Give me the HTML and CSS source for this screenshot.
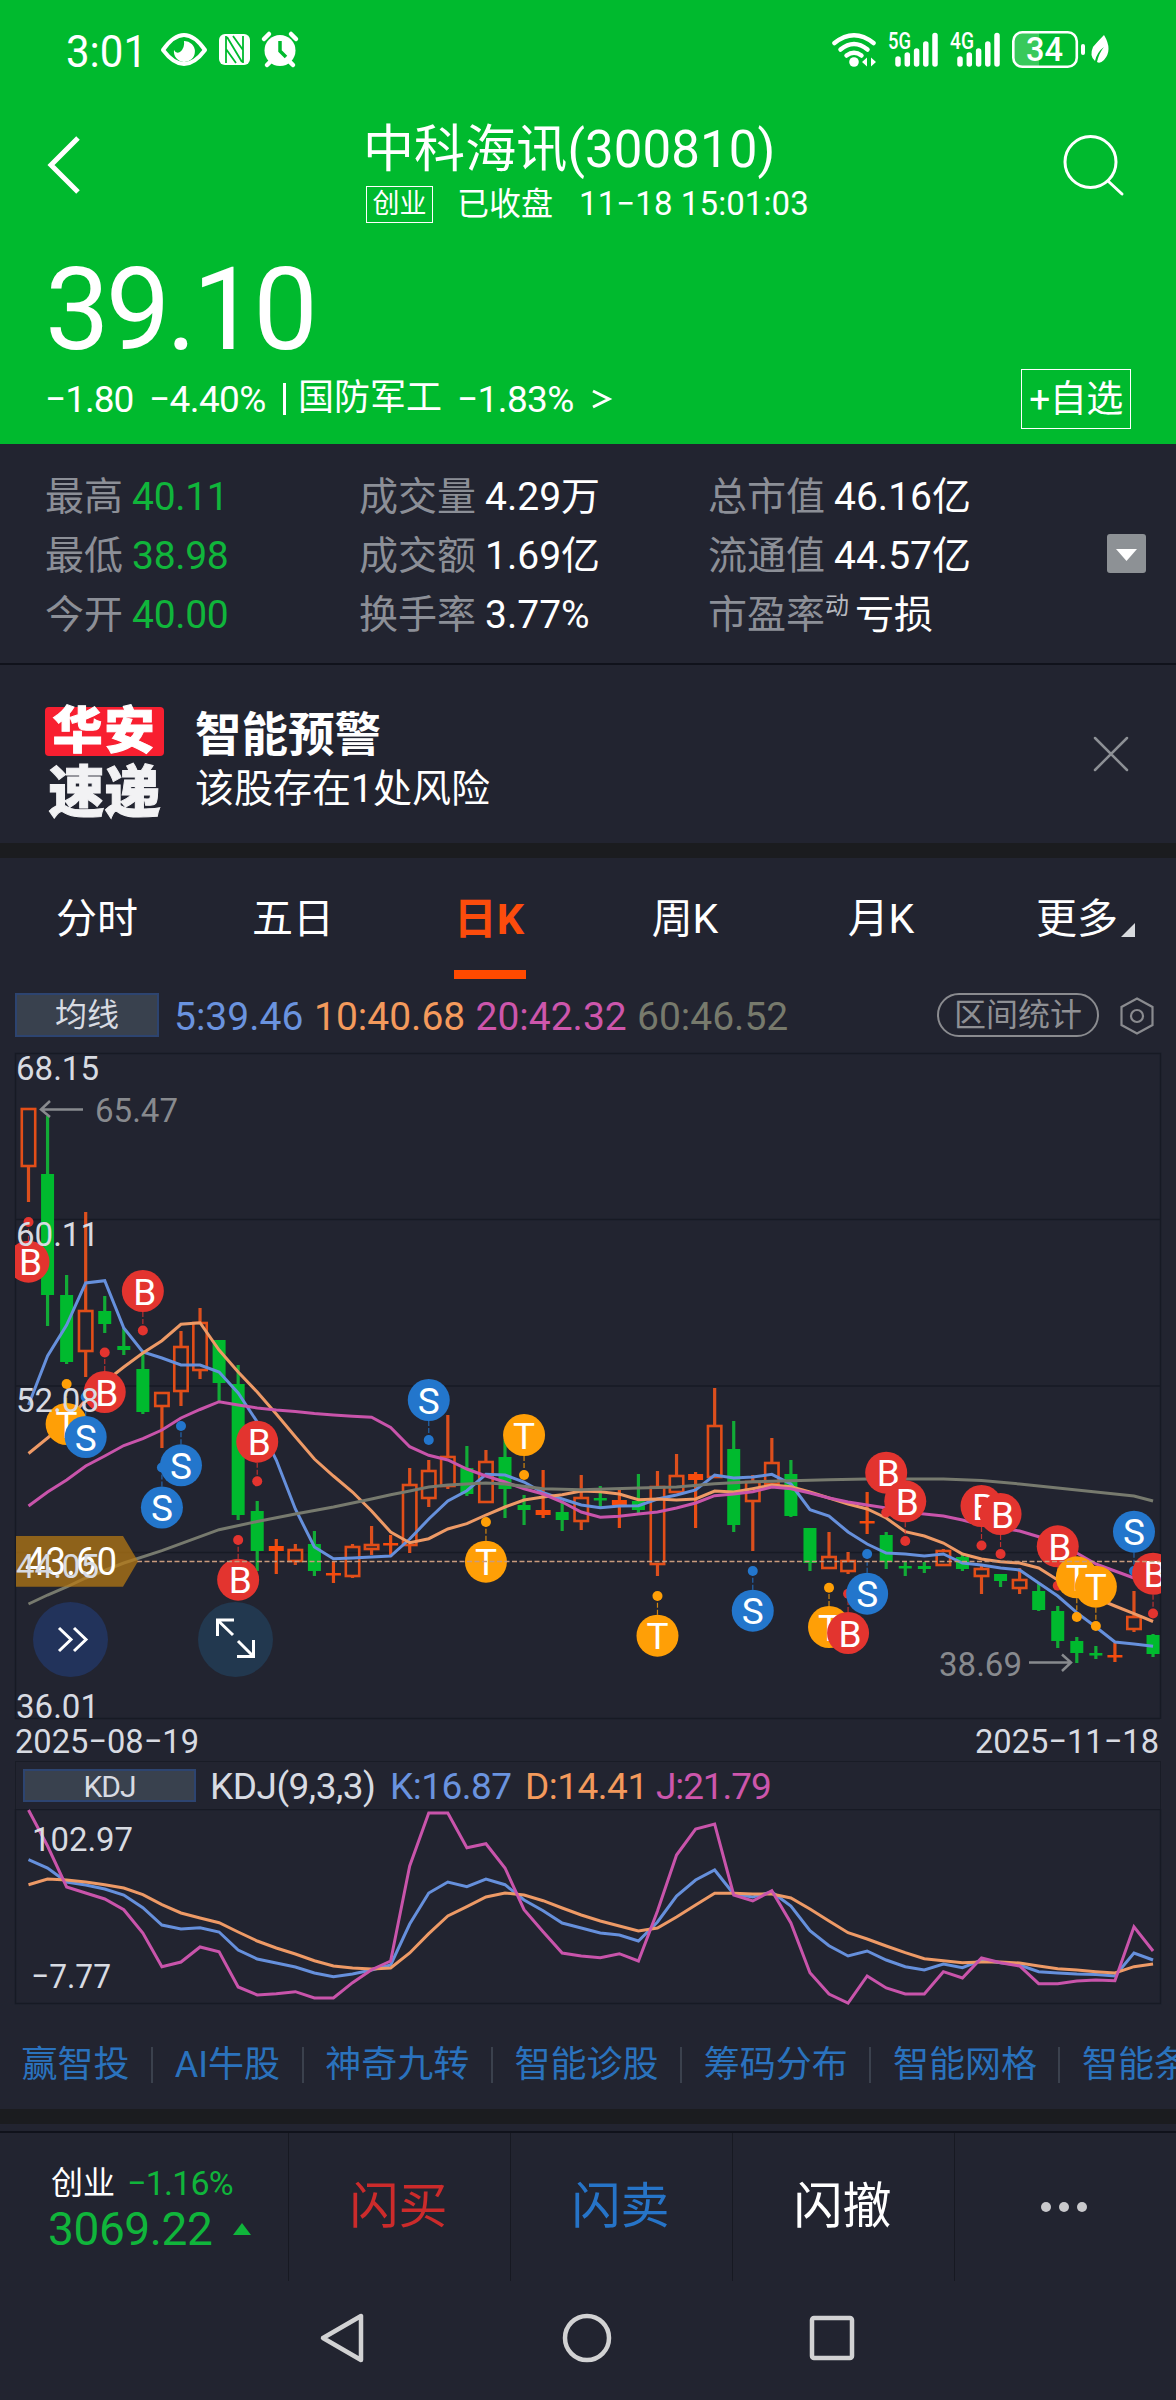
FILE: index.html
```html
<!DOCTYPE html>
<html lang="zh-CN">
<head>
    <meta charset="UTF-8">
    <meta name="viewport" content="width=device-width, initial-scale=1.0">
    <title>中科海讯(300810)</title>
    <link rel="stylesheet" href="styles.css">
</head>
<body>
    <header class="header">
        <div class="status-bar">
            <svg class="status-left" width="240" height="44" viewBox="64 28 240 44">
                <text x="66" y="66.500" font-size="45" textLength="81" lengthAdjust="spacingAndGlyphs" class="status-time">3:01</text>
                <path d="M163 50 Q184 20 205 50 Q184 78 163 50Z" fill="none" stroke="#fff" stroke-width="4" stroke-linejoin="round"/>
                <path d="M184 41 a10.500 10.500 0 1 1 -10 9 q2 4 6 2 q5 -4 4 -11z"/>
                <rect x="219" y="34" width="31" height="31" rx="6"/>
                <path d="M226 36 V63 M243 36 V63 M227 37 L242 62 M233 36 L243 50 M226 49 L236 63" stroke="#00ba2e" stroke-width="1.800" fill="none"/>
                <circle cx="280" cy="50.500" r="15.500"/>
                <path d="M264 39 l5 -5 M291 34 l5 5 M270 62 l-3 3 M290 62 l3 3" stroke="#fff" stroke-width="4.500" stroke-linecap="round"/>
                <path d="M280 41 V51 L286 57" fill="none" stroke="#00ba2e" stroke-width="3.500"/>
            </svg>
            <svg class="status-right" width="284" height="44" viewBox="830 28 284 44">
                <g fill="none" stroke="#fff" stroke-width="4.500" stroke-linecap="round">
                    <path d="M834.500 43 Q854 27.500 873.500 43"/>
                    <path d="M840.500 49.500 Q854 38.500 867.500 49.500"/>
                    <path d="M846.500 55.500 Q854 50 861.500 55.500"/>
                </g>
                <circle cx="854" cy="62" r="4.800"/>
                <path d="M862 62 l5 -4.500 v9z M876 62 l-5 -4.500 v9z"/>
                <text x="888" y="49" font-size="23" textLength="23" lengthAdjust="spacingAndGlyphs" class="status-net">5G</text>
                <path d="M898 59 V64 M907.300 55 V64 M916.600 51 V64 M925.800 44 V64 M935 35.500 V64" stroke="#fff" stroke-width="5.500" stroke-linecap="round"/>
                <text x="950" y="49" font-size="23" textLength="24" lengthAdjust="spacingAndGlyphs" class="status-net">4G</text>
                <path d="M960 59 V64 M969.300 55 V64 M978.600 51 V64 M987.800 44 V64 M997 35.500 V64" stroke="#fff" stroke-width="5.500" stroke-linecap="round"/>
                <path d="M1039 33 H1023 Q1014 33 1014 42 V57 Q1014 66 1023 66 H1039Z" opacity=".22"/>
                <rect x="1013.300" y="32.300" width="63.500" height="34.500" rx="9" fill="none" stroke="#fff" stroke-width="2.600"/>
                <text x="1026" y="61" font-size="33" textLength="37" lengthAdjust="spacingAndGlyphs" class="status-battery">34</text>
                <rect x="1081" y="44" width="4" height="11" rx="2"/>
                <path d="M1104 35 Q1113 50 1104 60 Q1100 64 1097 62 Q1099 53 1104 47 Q1097 52 1095 61 Q1089 56 1093 47 Q1098 41 1104 35Z"/>
            </svg>
        </div>

        <div class="title-bar">
            <svg class="back" width="36" height="60" viewBox="0 0 36 60"><path d="M32 3 L5 30 L32 57"/></svg>
            <div class="title-block">
                <h1>中科海讯(300810)</h1>
                <div class="subtitle"><span class="board">创业</span><span class="state">已收盘</span><span class="time">11−18 15:01:03</span></div>
            </div>
            <svg class="search" width="62" height="62" viewBox="0 0 62 62"><circle cx="27.500" cy="27" r="25.500"/><path d="M45 46 L59 59"/></svg>
        </div>

        <div class="price">39.10</div>
        <div class="change-row">
            <span class="chg">−1.80</span><span class="pct">−4.40%</span><span class="bar"></span><span class="sector">国防军工</span><span class="sector-pct">−1.83%</span>
            <svg class="more" width="22" height="22" viewBox="0 0 22 22"><path d="M2 3 L18 11 L2 19"/></svg>
            <span class="add">+自选</span>
        </div>
    </header>

    <section class="stats">
        <dl>
            <div><dt>最高</dt><dd class="down">40.11</dd></div>
            <div><dt>最低</dt><dd class="down">38.98</dd></div>
            <div><dt>今开</dt><dd class="down">40.00</dd></div>
        </dl>
        <dl>
            <div><dt>成交量</dt><dd>4.29万</dd></div>
            <div><dt>成交额</dt><dd>1.69亿</dd></div>
            <div><dt>换手率</dt><dd>3.77%</dd></div>
        </dl>
        <dl>
            <div><dt>总市值</dt><dd>46.16亿</dd></div>
            <div><dt>流通值</dt><dd>44.57亿</dd></div>
            <div><dt>市盈率<sup>动</sup></dt><dd>亏损</dd></div>
        </dl>
        <svg class="expand" width="39" height="39" viewBox="0 0 39 39"><rect width="39" height="39" rx="3" fill="#8d9195"/><path d="M9 15 H30 L19.500 27Z" fill="#fff"/></svg>
    </section>

    <section class="alert">
        <div class="logo"><span class="logo-top">华安</span><span class="logo-bottom">速递</span></div>
        <div class="alert-text">
            <strong>智能预警</strong>
            <p>该股存在1处风险</p>
        </div>
        <svg class="close" width="36" height="36" viewBox="0 0 36 36"><path d="M2 2 L34 34 M34 2 L2 34"/></svg>
    </section>

    <nav class="tabs">
        <span>分时</span>
        <span>五日</span>
        <span class="active">日K</span>
        <span>周K</span>
        <span>月K</span>
        <span class="tab-more">更多<i></i></span>
    </nav>

    <div class="ma-row">
        <span class="tag">均线</span>
        <span class="blue">5:39.46</span>
        <span class="orange">10:40.68</span>
        <span class="pink">20:42.32</span>
        <span class="grey">60:46.52</span>
        <span class="pill">区间统计</span>
        <svg width="36" height="40" viewBox="0 0 36 40"><path d="M18 2.500 L33.500 11 V29 L18 37.500 L2.500 29 V11Z"/><circle cx="18" cy="20" r="6"/></svg>
    </div>

    <svg id="kline" class="chart" width="1176" height="709" viewBox="0 1052 1176 709"></svg>

    <div class="kdj-row">
        <span class="tag">KDJ</span>
        <span class="kdj-name">KDJ(9,3,3)</span>
        <span class="blue">K:16.87</span>
        <span class="orange">D:14.41</span>
        <span class="pink">J:21.79</span>
    </div>
    <svg id="kdj" class="chart" width="1176" height="196" viewBox="0 1809 1176 196"></svg>

    <div class="links">
        <a>赢智投</a><a>AI牛股</a><a>神奇九转</a><a>智能诊股</a><a>筹码分布</a><a>智能网格</a><a>智能条件</a>
    </div>

    <footer class="trade-bar">
        <div class="index">
            <div class="index-top"><span>创业</span><em>−1.16%</em></div>
            <div class="index-value">3069.22<i></i></div>
        </div>
        <div class="buy">闪买</div>
        <div class="sell">闪卖</div>
        <div>闪撤</div>
        <div class="dots"><i></i><i></i><i></i></div>
    </footer>

    <div class="system-nav">
        <svg width="46" height="52" viewBox="0 0 46 52"><path d="M42 4 V48 L4 26Z"/></svg>
        <svg width="52" height="52" viewBox="0 0 52 52"><circle cx="26" cy="26" r="22"/></svg>
        <svg width="48" height="48" viewBox="0 0 48 48"><rect x="4" y="4" width="40" height="40" rx="2"/></svg>
    </div>

    <script src="chart.js"></script>
</body>
</html>
```

FILE: styles.css
```css
* {
    box-sizing: border-box;
}
body {
    margin: 0;
    width: 1176px;
    height: 2400px;
    overflow: hidden;
    background: #222430;
    color: #fff;
    font-family: Roboto, "Noto Sans CJK SC", sans-serif;
}
h1, p, dl, dd {
    margin: 0;
    font-weight: normal;
}
svg {
    display: block;
    flex: none;
}
svg text {
    font-family: Roboto, "Noto Sans CJK SC", sans-serif;
}

/* header */
.header {
    height: 444px;
    background: #00ba2e;
}
.status-bar {
    display: flex;
    justify-content: space-between;
    padding: 28px 62px 0 64px;
    height: 110px;
    fill: #fff;
}
.status-net, .status-battery {
    font-weight: 500;
}
.title-bar {
    display: flex;
    height: 140px;
}
.back {
    margin: 25px 0 0 46px;
    fill: none;
    stroke: #fff;
    stroke-width: 5;
}
.title-block {
    width: 700px;
    margin-left: 283px;
}
.title-block h1 {
    height: 76px;
    font-size: 51px;
    line-height: 79px;
    letter-spacing: 0.1px;
    text-indent: -2px;
    white-space: nowrap;
}
.subtitle {
    display: flex;
    align-items: center;
    height: 36px;
    padding-left: 1px;
    font-size: 33px;
    line-height: 36px;
    white-space: nowrap;
}
.board {
    width: 67px;
    height: 37px;
    margin-right: 24px;
    border: 1px solid #fff;
    font-size: 27px;
    line-height: 35px;
    text-align: center;
}
.state {
    width: 122px;
    font-size: 32px;
}
.time {
    letter-spacing: 0.1px;
}
.search {
    margin: 25px 0 0 -2px;
    fill: none;
    stroke: #fff;
    stroke-width: 3;
    stroke-linecap: round;
}
.price {
    height: 114px;
    padding-left: 45px;
    font-size: 115px;
    line-height: 119px;
    letter-spacing: -4px;
}
.change-row {
    display: flex;
    align-items: center;
    height: 70px;
    padding: 0 45px;
    font-size: 37px;
    white-space: nowrap;
}
.chg {
    width: 104px;
    letter-spacing: -1px;
}
.pct {
    width: 133px;
    letter-spacing: -0.6px;
}
.bar {
    width: 3px;
    height: 32px;
    margin: 0 12px 0 1px;
    background: #fff;
}
.sector {
    width: 159px;
    font-size: 36px;
    line-height: 60px;
    margin-top: -2px;
}
.sector-pct {
    width: 134px;
    letter-spacing: -0.6px;
}
.more {
    fill: none;
    stroke: #fff;
    stroke-width: 3;
}
.add {
    width: 110px;
    height: 60px;
    margin-left: auto;
    border: 1px solid #fff;
    font-size: 37px;
    line-height: 60px;
    letter-spacing: -0.5px;
    text-align: center;
}

/* stats */
.stats {
    display: flex;
    height: 221px;
    padding: 23px 30px 0 45px;
    border-bottom: 2px solid #10121b;
    font-size: 39px;
    line-height: 60px;
}
.stats dl {
    width: 349px;
}
.stats dl:first-child {
    width: 314px;
}
.stats dl > div {
    display: flex;
    gap: 9px;
    height: 59px;
    white-space: nowrap;
}
.stats dt {
    color: #8c8f97;
}
.stats sup {
    display: inline-block;
    width: 21px;
    color: #b6b8be;
    font-size: 24px;
    line-height: 24px;
    vertical-align: 14px;
}
.down {
    color: #10b53b;
    letter-spacing: -0.3px;
}
.expand {
    margin: 67px 0 0 auto;
}

/* alert */
.alert {
    display: flex;
    height: 193px;
    padding: 42px 47px 0 45px;
    border-bottom: 15px solid #1b1c1f;
}
.logo {
    width: 119px;
    font-size: 50px;
    font-weight: 900;
    text-align: center;
}
.logo span {
    display: block;
    white-space: nowrap;
}
.logo-top {
    height: 49px;
    border-radius: 4px;
    background: #f81f30;
    line-height: 49px;
    letter-spacing: 2px;
    -webkit-text-stroke: 1px #fff;
}
.logo-bottom {
    height: 60px;
    color: #f2f2f4;
    font-size: 56px;
    line-height: 74px;
    -webkit-text-stroke: 1px #f2f2f4;
}
.alert-text {
    margin-left: 31px;
}
.alert-text strong {
    display: block;
    font-size: 46.500px;
    line-height: 56px;
}
.alert-text p {
    font-size: 39px;
    line-height: 53px;
}
.close {
    margin: 29px 0 0 auto;
    fill: none;
    stroke: #8d9095;
    stroke-width: 2.5;
    stroke-linecap: round;
}

/* period tabs */
.tabs {
    display: grid;
    grid-template-columns: repeat(6, 196px);
    height: 122px;
    font-size: 41px;
    line-height: 123px;
    text-align: center;
    text-indent: -2px;
}
.tabs span {
    position: relative;
}
.tabs .active {
    color: #fc4c0c;
    font-size: 43px;
    font-weight: bold;
}
.tabs .active::after {
    content: "";
    position: absolute;
    left: 62px;
    bottom: 2px;
    width: 72px;
    height: 9px;
    background: #ff4a00;
}
.tab-more i {
    position: absolute;
    left: 141px;
    top: 65px;
    border-left: 14px solid transparent;
    border-bottom: 14px solid #d8dade;
}

/* indicator rows */
.tag {
    border: 2px solid #2d4470;
    background: #39414e;
    color: #d8dbe2;
    text-align: center;
}
.blue {
    color: #6a93df;
}
.orange {
    color: #f49a5c;
}
.pink {
    color: #cd56ac;
}
.grey {
    color: #777a6c;
}
.ma-row {
    display: flex;
    height: 72px;
    padding: 13px 21px 0 15px;
    font-size: 39px;
    line-height: 49px;
    white-space: nowrap;
}
.ma-row .tag {
    width: 144px;
    height: 44px;
    margin-right: 15px;
    font-size: 32px;
    line-height: 41px;
}
.ma-row .blue {
    width: 140px;
}
.ma-row .orange, .ma-row .pink {
    width: 161.5px;
}
.pill {
    width: 162px;
    height: 44px;
    margin: 0 20px 0 auto;
    border: 2px solid #8a8b8f;
    border-radius: 22px;
    color: #8f9094;
    font-size: 32px;
    line-height: 41px;
    text-align: center;
}
.ma-row svg {
    margin-top: 3px;
    fill: none;
    stroke: #8a8b8f;
    stroke-width: 2.2;
}
.kdj-row {
    display: flex;
    height: 48px;
    margin: 0 15px;
    padding: 7px 0 0 7px;
    border: 1px solid #191c26;
    border-bottom: 0;
    font-size: 37px;
    line-height: 35px;
    letter-spacing: -0.5px;
    white-space: nowrap;
}
.kdj-row .tag {
    width: 173px;
    height: 33px;
    margin-right: 14px;
    font-size: 30px;
    line-height: 31px;
    letter-spacing: -1px;
}
.kdj-name {
    width: 180px;
    color: #d8dbe2;
}
.kdj-row .blue {
    width: 135px;
}
.kdj-row .orange {
    width: 131px;
}
.kdj-row .pink {
    letter-spacing: -1.1px;
}

/* links */
.links {
    display: flex;
    align-items: center;
    height: 119px;
    padding-top: 15px;
    overflow: hidden;
    border-bottom: 15px solid #1b1c1f;
    color: #2a72bd;
    font-size: 36px;
    line-height: 36px;
    white-space: nowrap;
}
.links a {
    padding: 0 21.6px;
    border-left: 2.5px solid #3b414d;
}
.links a:first-child {
    border-left: 0;
}

/* trade bar */
.trade-bar {
    display: grid;
    grid-template-columns: 288px 222px 222px 222px 222px;
    height: 147px;
    margin-top: 7px;
    border-top: 2px solid #10121b;
    font-size: 49px;
    line-height: 148px;
    text-align: center;
    text-indent: -2px;
}
.trade-bar > div + div {
    border-left: 1px solid #171922;
}
.index {
    padding: 30px 0 0 50px;
    text-align: left;
}
.index-top {
    display: flex;
    gap: 14px;
    padding-left: 3px;
    font-size: 32px;
    line-height: 40px;
}
.index em {
    color: #10b53b;
    font-size: 34px;
    font-style: normal;
    letter-spacing: -0.8px;
}
.index-value {
    display: flex;
    align-items: center;
    gap: 21px;
    color: #10b53b;
    font-size: 46px;
    line-height: 52px;
    letter-spacing: -0.4px;
}
.index-value i {
    border: 9px solid transparent;
    border-top: 0;
    border-bottom: 12px solid #10b53b;
}
.buy {
    color: #cc2b2b;
}
.sell {
    color: #2674c8;
}
.dots {
    display: flex;
    justify-content: center;
    align-items: center;
    gap: 8px;
    padding-right: 3px;
}
.dots i {
    width: 10px;
    height: 10px;
    border-radius: 50%;
    background: #c9c9cc;
}

/* system navigation */
.system-nav {
    display: flex;
    justify-content: space-between;
    align-items: center;
    height: 120px;
    padding: 0 320px 0 319px;
    fill: none;
    stroke: #d2d2d3;
    stroke-width: 4.5;
    stroke-linejoin: round;
}
```

FILE: chart.js
```js
const STEP = 19.06;
const X0 = 28.5;
const COLORS = { B: '#e3342f', S: '#2376cc', T: '#ff9f06' };

// type, high, open/close top, open/close bottom, low
// u: hollow up, s: solid up, d: down
const candles = [
    ['u', 1108, 1109, 1166, 1202], ['d', 1116, 1174, 1295, 1326], ['d', 1275, 1295, 1362, 1364], ['u', 1212, 1311, 1351, 1377],
    ['d', 1296, 1311, 1324, 1333], ['d', 1328, 1346, 1350, 1355], ['d', 1350, 1369, 1412, 1414], ['u', 1392, 1393, 1406, 1448],
    ['u', 1331, 1347, 1391, 1406], ['u', 1308, 1323, 1370, 1379], ['d', 1340, 1340, 1383, 1402], ['d', 1365, 1384, 1515, 1520],
    ['d', 1501, 1511, 1551, 1571], ['s', 1539, 1546, 1551, 1574], ['u', 1544, 1550, 1561, 1565], ['d', 1531, 1544, 1571, 1576],
    ['s', 1561, 1573, 1575, 1583], ['u', 1544, 1547, 1576, 1578], ['u', 1526, 1545, 1549, 1555], ['s', 1535, 1543, 1545, 1557],
    ['u', 1468, 1485, 1545, 1553], ['u', 1460, 1471, 1498, 1507], ['u', 1415, 1457, 1486, 1489], ['d', 1446, 1468, 1494, 1496],
    ['u', 1450, 1462, 1502, 1503], ['d', 1440, 1457, 1489, 1518], ['d', 1495, 1505, 1510, 1525], ['s', 1470, 1510, 1515, 1518],
    ['d', 1503, 1512, 1520, 1531], ['u', 1475, 1498, 1521, 1530], ['d', 1486, 1498, 1500, 1508], ['s', 1489, 1500, 1505, 1528],
    ['d', 1474, 1501, 1510, 1515], ['u', 1471, 1487, 1564, 1576], ['u', 1454, 1476, 1492, 1493], ['s', 1472, 1474, 1480, 1528],
    ['u', 1388, 1426, 1477, 1478], ['d', 1421, 1449, 1525, 1532], ['u', 1475, 1482, 1501, 1551], ['u', 1438, 1463, 1484, 1485],
    ['d', 1460, 1474, 1516, 1517], ['d', 1528, 1528, 1563, 1571], ['u', 1532, 1557, 1568, 1569], ['u', 1552, 1561, 1571, 1574],
    ['s', 1492, 1521, 1523, 1534], ['d', 1532, 1535, 1562, 1569], ['d', 1561, 1566, 1568, 1576], ['d', 1562, 1566, 1569, 1573],
    ['u', 1549, 1551, 1565, 1566], ['d', 1555, 1557, 1569, 1571], ['u', 1566, 1569, 1576, 1594], ['d', 1574, 1574, 1581, 1587],
    ['u', 1568, 1580, 1588, 1594], ['d', 1583, 1591, 1610, 1611], ['d', 1606, 1611, 1641, 1648], ['d', 1637, 1641, 1653, 1663],
    ['d', 1646, 1653, 1655, 1659], ['s', 1643, 1655, 1657, 1662], ['u', 1591, 1617, 1629, 1632], ['d', 1634, 1635, 1654, 1657]
];

const ma5 = [1405, 1356, 1325, 1283, 1280.7, 1328, 1352, 1358, 1365, 1365, 1372, 1393, 1422, 1460, 1509, 1547, 1558.7, 1558, 1557, 1556, 1539, 1519, 1501, 1490.7, 1474.3, 1475, 1482, 1492.7, 1499, 1505, 1507.7, 1506, 1505.7, 1499, 1495, 1490, 1475, 1478, 1477, 1474.3, 1484, 1509.7, 1516, 1532, 1544, 1553, 1554, 1556, 1554, 1563, 1565, 1568, 1570, 1583, 1596, 1612.7, 1627, 1642, 1644, 1646.3];
const ma10 = [1453.5, 1438, 1422, 1400, 1382, 1367, 1353, 1340.7, 1324.3, 1322.7, 1350, 1372, 1392, 1414, 1436.7, 1459, 1476, 1492, 1511, 1532, 1542.7, 1538.7, 1529, 1523.7, 1515, 1507, 1500, 1497, 1494.7, 1491, 1491.7, 1494, 1499.7, 1499, 1500, 1499, 1491, 1492, 1488.7, 1485, 1486.7, 1492, 1498, 1504, 1509, 1518, 1531.7, 1536, 1543, 1554, 1559, 1561.7, 1563, 1568, 1580, 1590, 1598, 1606, 1613.7, 1621.5];
const ma20 = [1506, 1492, 1480, 1466, 1456, 1445.5, 1438.7, 1430, 1418, 1409.5, 1401.7, 1405, 1408, 1410, 1411.5, 1413.5, 1415, 1416.3, 1417.3, 1427.5, 1446.7, 1455.3, 1460, 1469, 1476, 1482, 1488.7, 1494, 1502, 1512, 1517.3, 1516.3, 1514, 1512, 1508, 1503, 1495.7, 1494, 1491.7, 1487, 1488.7, 1493, 1498, 1502, 1505, 1508, 1512, 1514, 1516, 1520, 1525, 1528, 1531, 1536.7, 1546, 1553, 1564, 1571, 1578, 1586];
// the 60 day average is sparse: [index, y]
const ma60 = [[0, 1604], [1, 1595], [2, 1587], [3, 1578], [5, 1563], [7, 1550.7], [10, 1529.7], [12, 1521.5], [14, 1514], [16, 1507], [18, 1499], [19, 1494.7], [20, 1491], [21, 1487], [22, 1485], [24, 1483], [25, 1484], [27, 1488.7], [29, 1489.7], [32, 1488], [34, 1487], [36, 1483.7], [38, 1481.7], [40, 1480.7], [42, 1479.7], [44, 1479], [48, 1479], [50, 1480.5], [52, 1484], [54, 1488], [56, 1492], [58, 1496], [59, 1501]];

// letter, candle index, badge y, dot y
const marks = [
    ['B', 0, 1261.7, 1222], ['T', 2, 1424, 1384], ['S', 3, 1437, 1397], ['B', 4, 1392, 1352.5], ['B', 6, 1291, 1330.5],
    ['S', 7, 1507.5, 1467.5], ['S', 8, 1465.3, 1426], ['B', 11, 1579.7, 1540], ['B', 12, 1441.7, 1481.3], ['S', 21, 1400, 1440],
    ['T', 24, 1561.7, 1522], ['T', 26, 1435, 1475], ['T', 33, 1635.7, 1596], ['S', 38, 1610.7, 1571], ['T', 42, 1627, 1587.7],
    ['B', 43, 1633, 1593.7], ['S', 44, 1593.7, 1554], ['B', 45, 1472.7, 1512.5], ['B', 46, 1501.3, 1541], ['B', 50, 1506, 1545.5],
    ['B', 51, 1514, 1554], ['B', 54, 1546.3, 1585.7], ['T', 55, 1577.3, 1617], ['T', 56, 1586.7, 1626], ['S', 58, 1531.7, 1571],
    ['B', 59, 1573.7, 1613.5]
];

const kLine = [1859.7, 1868, 1882, 1885, 1889, 1895, 1907.7, 1925, 1929, 1927.7, 1932, 1950, 1959, 1963, 1967, 1973, 1976.7, 1974, 1970, 1965, 1924, 1893, 1882, 1886.7, 1879, 1884.7, 1900, 1910.7, 1923, 1928, 1933, 1935, 1941, 1922, 1896, 1880, 1870, 1894, 1897, 1892, 1906, 1930.7, 1945.7, 1956, 1951, 1960, 1966.7, 1970, 1964, 1967.7, 1960, 1962.7, 1965, 1971.7, 1973, 1974, 1974.5, 1976, 1953, 1960];
const dLine = [1884.7, 1879, 1880, 1882, 1884.7, 1888, 1894.7, 1904.7, 1913, 1918, 1922.7, 1932, 1941, 1948, 1954, 1960.7, 1966, 1968, 1969, 1968, 1953, 1933.7, 1916, 1906.7, 1897, 1893, 1895, 1900.7, 1908, 1915, 1921, 1926, 1931, 1928, 1917, 1905, 1893.3, 1893.3, 1894, 1894, 1898, 1909, 1921, 1932.7, 1939, 1946, 1952.7, 1958.7, 1960.7, 1962.7, 1962, 1962, 1963, 1966, 1968.7, 1970, 1971.7, 1973, 1966.7, 1964];
const jLine = [1810, 1846, 1887, 1893, 1899, 1909.7, 1933, 1966.7, 1962, 1947, 1951.7, 1987, 1995, 1993.7, 1991.7, 1998, 1998, 1982.7, 1969.7, 1961, 1866, 1813, 1813, 1847.7, 1843.7, 1868, 1909.7, 1931.7, 1953, 1956, 1957.7, 1953.7, 1961, 1911, 1855, 1829, 1824, 1895, 1901, 1890.7, 1923, 1972.7, 1994, 2003, 1976, 1988, 1994, 1994, 1971.7, 1978, 1958, 1962.7, 1966, 1983.7, 1983.7, 1981, 1980, 1980.7, 1926.7, 1951];

const x = i => X0 + i * STEP;

function line(points, color) {
    const pts = points.map((p, i) => Array.isArray(p) ? `${x(p[0])},${p[1]}` : `${x(i)},${p}`).join(' ');
    return `<polyline points="${pts}" fill="none" stroke="${color}" stroke-width="3"/>`;
}

function candle([type, high, top, bottom, low], i) {
    const cx = x(i);
    const color = type === 'd' ? '#00ba2e' : '#f84b0c';
    if (type === 'u') {
        return `<path d="M${cx} ${high} V${top} M${cx} ${bottom} V${low}" stroke="#dc4f1d" stroke-width="3.2"/>
            <rect x="${cx - 6.7}" y="${top}" width="13.4" height="${bottom - top}" fill="none" stroke="#e24e18" stroke-width="2.6"/>`;
    }
    const w = type === 'd' ? 13 : 15;
    return `<path d="M${cx} ${high} V${low}" stroke="${type === 'd' ? '#12ab36' : '#e84d14'}" stroke-width="3.2"/>
        <rect x="${cx - w / 2}" y="${top}" width="${w}" height="${Math.max(bottom - top, 2.5)}" fill="${color}"/>`;
}

function mark([letter, i, y, dot]) {
    const cx = x(i);
    const color = COLORS[letter];
    const dx = letter === 'B' ? 2 : 0;
    return `<path d="M${cx} ${y} V${dot}" stroke="${color}" stroke-width="1.2" stroke-dasharray="5 2" opacity=".8"/>
        <circle cx="${cx}" cy="${dot}" r="5" fill="${color}"/>
        <circle cx="${cx}" cy="${y}" r="21" fill="${color}"/>
        <text x="${cx + dx}" y="${y + 13.5}" font-size="37" fill="#fff" text-anchor="middle">${letter}</text>`;
}

function label(text, left, baseline, width, color, size) {
    return `<text x="${left}" y="${baseline}" font-size="${size || 34}" textLength="${width}" lengthAdjust="spacingAndGlyphs" fill="${color || '#d8dbe2'}">${text}</text>`;
}

document.getElementById('kline').innerHTML = `
    <defs><clipPath id="plot"><rect x="15" y="1052" width="1146" height="709"/></clipPath></defs>
    <path d="M15.500 1719 V1053.500 H1160.500 V1719 M15 1219.500 H1160 M15 1386 H1160 M15 1552.500 H1160 M15 1718.500 H1160" fill="none" stroke="#171a24" stroke-width="1.500"/>
    <g clip-path="url(#plot)">
        ${candles.map(candle).join('')}
        ${line(ma5, '#6690dc')}${line(ma10, '#ee9a66')}${line(ma20, '#c954ab')}${line(ma60, '#777a6e')}
        ${marks.map(mark).join('')}
    </g>
    <path d="M137 1561.500 H1160" stroke="#c99a7c" stroke-width="1.300" stroke-dasharray="5 2.500"/>
    <path d="M16 1536 H123 L138 1561.300 L123 1586.700 H16Z" fill="#b97a12" opacity=".72"/>
    ${label('43.60', 25, 1575, 92, '#fff', 38)}
    ${label('68.15', 16, 1080, 83)}
    ${label('60.11', 16, 1246, 83)}
    ${label('52.08', 16, 1412, 83)}
    ${label('44.05', 16, 1578, 83)}
    ${label('36.01', 16, 1718, 83)}
    ${label('2025−08−19', 15, 1753, 184)}
    ${label('2025−11−18', 975, 1753, 184)}
    ${label('65.47', 95, 1122, 83, '#888a8e')}
    ${label('38.69', 939, 1676, 83, '#888a8e')}
    <path d="M83 1109.500 H41 M50 1101 L41 1109.500 L50 1117 M1029 1662.500 H1071 M1062 1654.500 L1071 1662.500 L1062 1671" fill="none" stroke="#888a8e" stroke-width="2.500"/>
    <circle cx="70.500" cy="1639.500" r="37.500" fill="#22335b"/>
    <path d="M59 1628 L71 1639.500 L59 1651 M74 1628 L86 1639.500 L74 1651" fill="none" stroke="#fff" stroke-width="3"/>
    <circle cx="235.500" cy="1639.500" r="37.500" fill="#22384f"/>
    <path d="M217.500 1636 V1620 H234 M218 1620.500 L233 1635 M237 1656.500 H253.500 V1640 M253 1656 L238 1641" fill="none" stroke="#fff" stroke-width="3"/>`;

document.getElementById('kdj').innerHTML = `
    <path d="M15.500 1809 V2003.500 H1160.500 V1809 M15 1809.500 H1160" fill="none" stroke="#171a24" stroke-width="1.500"/>
    ${line(kLine, '#6690dc')}${line(dLine, '#ee9a66')}${line(jLine, '#c954ab')}
    ${label('102.97', 32, 1851, 101)}
    ${label('−7.77', 31, 1988, 80)}`;
```
